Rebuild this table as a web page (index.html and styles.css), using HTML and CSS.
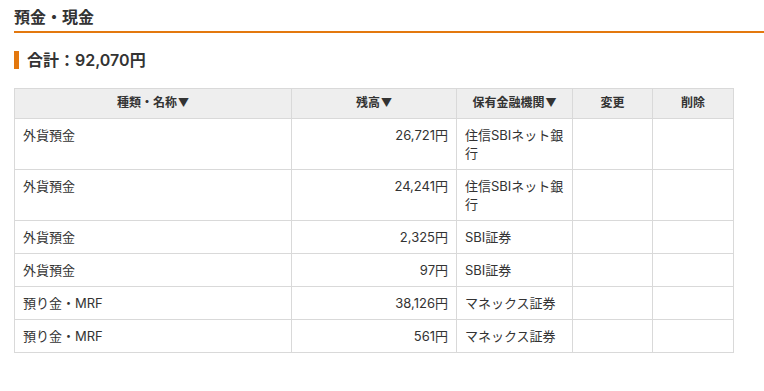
FILE: index.html
```html
<!DOCTYPE html>
<html lang="ja">
<head>
<meta charset="utf-8">
<link rel="stylesheet" href="styles.css">
</head>
<body>
<div class="page">
  <h2 class="title">預金・現金</h2>
  <h3 class="total">合計：92,070円</h3>
  <table class="list">
    <colgroup>
      <col class="c-name">
      <col class="c-amt">
      <col class="c-inst">
      <col class="c-edit">
      <col class="c-del">
    </colgroup>
    <thead>
      <tr>
        <th>種類・名称<span class="arrow">▼</span></th>
        <th>残高<span class="arrow">▼</span></th>
        <th>保有金融機関<span class="arrow">▼</span></th>
        <th>変更</th>
        <th>削除</th>
      </tr>
    </thead>
    <tbody>
      <tr><td>外貨預金</td><td class="num">26,721円</td><td>住信SBIネット銀行</td><td></td><td></td></tr>
      <tr><td>外貨預金</td><td class="num">24,241円</td><td>住信SBIネット銀行</td><td></td><td></td></tr>
      <tr><td>外貨預金</td><td class="num">2,325円</td><td>SBI証券</td><td></td><td></td></tr>
      <tr><td>外貨預金</td><td class="num">97円</td><td>SBI証券</td><td></td><td></td></tr>
      <tr><td>預り金・MRF</td><td class="num">38,126円</td><td>マネックス証券</td><td></td><td></td></tr>
      <tr><td>預り金・MRF</td><td class="num">561円</td><td>マネックス証券</td><td></td><td></td></tr>
    </tbody>
  </table>
</div>
</body>
</html>
```
FILE: styles.css
```css
html, body {
  margin: 0;
  padding: 0;
  background: #fff;
}
body {
  font-family: Inter, "Noto Sans CJK JP", sans-serif;
  color: #333;
}
.page {
  padding-left: 14px;
}
.title {
  margin: 0;
  padding: 6px 0 3px;
  font-size: 16px;
  line-height: 22px;
  font-weight: bold;
  color: #333;
  border-bottom: 2px solid #e3780e;
}
.total {
  margin: 18px 0 0;
  padding-left: 8px;
  border-left: 5px solid #e3780e;
  font-size: 16px;
  line-height: 18px;
  font-weight: 600;
  color: #333;
}
.list {
  margin-top: 19px;
  width: 720px;
  table-layout: fixed;
  border-collapse: collapse;
  font-size: 13px;
  line-height: 18px;
}
.c-name { width: 277px; }
.c-amt { width: 165px; }
.c-inst { width: 116px; }
.c-edit { width: 80px; }
.c-del { width: 81px; }
.list th, .list td {
  border: 1px solid #d9d9d9;
}
.list th {
  background: #eeeeee;
  font-size: 12px;
  font-weight: bold;
  padding: 5px 8px 6px;
  text-align: center;
  color: #333;
  height: 18px;
  box-sizing: content-box;
}
.arrow {
  font-family: "Noto Sans CJK JP", sans-serif;
  font-size: 11px;
  line-height: 0;
  margin-left: 1px;
}
.list td {
  padding: 7px 8px;
  vertical-align: top;
  text-align: left;
}
.list td.num {
  text-align: right;
}
```
